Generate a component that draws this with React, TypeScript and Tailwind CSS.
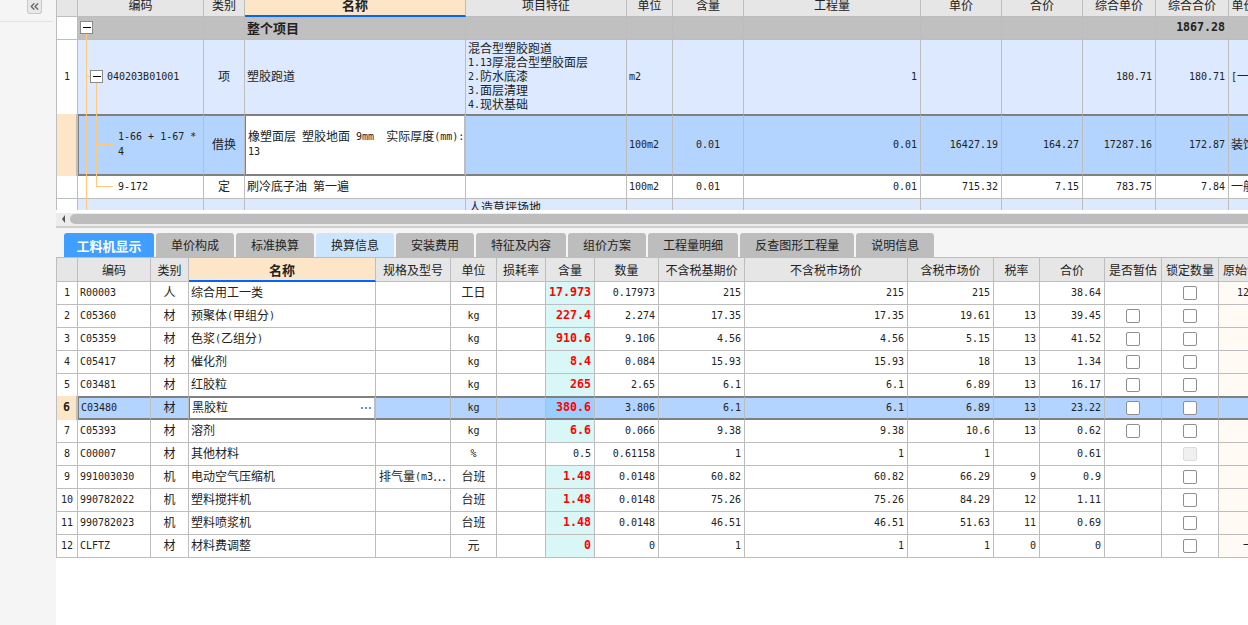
import type { ReactNode } from "react";
import { ChevronsLeft } from "lucide-react";

const TOP_COLS = "grid w-[1270px] grid-cols-[21px_126px_41px_221px_161px_46px_71px_177px_81px_81px_73px_73px_78px]";
const LOW_COLS = "grid w-[1248px] grid-cols-[21px_73px_38px_187px_75px_46px_49px_49px_64px_86px_163px_86px_46px_65px_57px_57px_57px]";

/** Latin runs go in a narrow mono face, the way the bitmap font draws them next to CJK */
function T({ text, bold }: { text: string; bold?: boolean }) {
  const parts = text.split(/([\x20-\x7e]+)/).filter(Boolean);
  return (
    <span className="block min-w-0 pb-[2px]">
      {parts.map((p, i) =>
        /^[\x20-\x7e]+$/.test(p) ? (
          <span
            key={i}
            className={bold ? "align-[1px] font-['DejaVu_Sans_Mono'] text-[11.6px] font-bold" : "align-[1px] font-['DejaVu_Sans_Mono'] text-[10px]"}
          >
            {p}
          </span>
        ) : (
          <span key={i} className={bold ? "text-[13px] font-bold" : ""}>
            {p}
          </span>
        )
      )}
    </span>
  );
}

const alignClass = {
  l: "justify-start pl-[2px]",
  c: "justify-center",
  r: "justify-end pr-[3px]",
};

interface CellProps {
  text?: string;
  align?: "l" | "c" | "r";
  className?: string;
  bold?: boolean;
  children?: ReactNode;
}

function Cell({ text, align = "l", className = "", bold, children }: CellProps) {
  return (
    <div className={`flex min-w-0 items-center overflow-hidden whitespace-pre border-r border-solid border-r-[#bdbdbd] ${alignClass[align]} ${className}`}>
      {text !== undefined && <T text={text} bold={bold} />}
      {children}
    </div>
  );
}

function HeaderRow({ cols, labels, nameAt, height }: { cols: string; labels: string[]; nameAt: number; height: string }) {
  return (
    <div className={`${cols} ${height}`}>
      {labels.map((label, i) =>
        i === nameAt ? (
          <div key={i} className="flex items-center justify-center overflow-hidden whitespace-nowrap border-b-2 border-r border-b-[#0066ff] border-r-[#bdbdbd] bg-[#fde6c8] text-[13px] font-bold">
            {label}
          </div>
        ) : (
          <div key={i} className="flex items-center justify-center overflow-hidden whitespace-nowrap border-b border-r border-[#bdbdbd] bg-[#e6e6e6]">
            {label}
          </div>
        )
      )}
    </div>
  );
}

const line = "border-b border-b-[#bdbdbd]";
const picked = "border-y-2 border-y-[#808080]";

const features = ["混合型塑胶跑道", "1.13厚混合型塑胶面层", "2.防水底漆", "3.面层清理", "4.现状基础"];

function TopTable() {
  const labels = ["", "编码", "类别", "名称", "项目特征", "单位", "含量", "工程量", "单价", "合价", "综合单价", "综合合价", "单价构成文件"];
  return (
    <div className="relative h-[210px] overflow-hidden border-l border-l-[#bdbdbd]">
      <div className="-mt-[7px]">
        <HeaderRow cols={TOP_COLS} labels={labels} nameAt={3} height="h-[24px]" />

        {/* whole project */}
        <div className={`${TOP_COLS} h-[23px]`}>
          <Cell className={`bg-white ${line}`} />
          {labels.slice(1).map((_, i) => (
            <Cell
              key={i}
              className={`bg-[#c0c0c0] ${line}`}
              align={i === 10 ? "r" : "l"}
              text={i === 2 ? "整个项目" : i === 10 ? "1867.28" : undefined}
              bold
            />
          ))}
        </div>

        {/* bill item */}
        <div className={`${TOP_COLS} h-[74px] bg-[#dce9fe]`}>
          <Cell className="bg-white" align="c" text="1" />
          <Cell className="pl-[29px]" text="040203B01001" />
          <Cell align="c" text="项" />
          <Cell text="塑胶跑道" />
          <Cell>
            <div>
              {features.map((f) => (
                <div key={f} className="flex h-[14px] items-center">
                  <T text={f} />
                </div>
              ))}
            </div>
          </Cell>
          <Cell text="m2" />
          <Cell />
          <Cell align="r" text="1" />
          <Cell />
          <Cell />
          <Cell align="r" text="180.71" />
          <Cell align="r" text="180.71" />
          <Cell text="[一" />
        </div>

        {/* selected substitution */}
        <div className={`${TOP_COLS} h-[62px]`}>
          <Cell className="border-r-2 border-r-[#0066ff] bg-[#fde6c8]" />
          <Cell className={`${picked} border-l border-l-[#808080] bg-[#b3d4ff] pl-[39px] leading-[14px]`} text={"1-66 + 1-67 *\n4"} />
          <Cell align="c" className={`${picked} border-r-[#808080] bg-[#b3d4ff]`} text="借换" />
          <Cell className={`${picked} border-r-2 border-l border-x-[#808080] bg-white pl-[1px] leading-[14px]`} text={"橡塑面层 塑胶地面 9mm  实际厚度(mm):\n13"} />
          <Cell className={`${picked} bg-[#b3d4ff]`} />
          <Cell className={`${picked} bg-[#b3d4ff]`} text="100m2" />
          <Cell align="c" className={`${picked} bg-[#b3d4ff]`} text="0.01" />
          <Cell align="r" className={`${picked} bg-[#b3d4ff]`} text="0.01" />
          <Cell align="r" className={`${picked} bg-[#b3d4ff]`} text="16427.19" />
          <Cell align="r" className={`${picked} bg-[#b3d4ff]`} text="164.27" />
          <Cell align="r" className={`${picked} bg-[#b3d4ff]`} text="17287.16" />
          <Cell align="r" className={`${picked} bg-[#b3d4ff]`} text="172.87" />
          <Cell className={`${picked} bg-[#b3d4ff]`} text="装饰" />
        </div>

        {/* quota row */}
        <div className={`${TOP_COLS} h-[23px] bg-white`}>
          <Cell className={line} />
          <Cell className={`${line} pl-[40px]`} text="9-172" />
          <Cell align="c" className={line} text="定" />
          <Cell className={line} text="刷冷底子油 第一遍" />
          <Cell className={line} />
          <Cell className={line} text="100m2" />
          <Cell align="c" className={line} text="0.01" />
          <Cell align="r" className={line} text="0.01" />
          <Cell align="r" className={line} text="715.32" />
          <Cell align="r" className={line} text="7.15" />
          <Cell align="r" className={line} text="783.75" />
          <Cell align="r" className={line} text="7.84" />
          <Cell className={line} text="一般" />
        </div>

        {/* next item, cut off by the pane */}
        <div className={`${TOP_COLS} h-[75px] bg-[#dce9fe]`}>
          <Cell className="bg-white" />
          <Cell />
          <Cell />
          <Cell />
          <Cell className="items-start pl-[3px] pt-[2px]" text="人造草坪场地" />
          <Cell />
          <Cell />
          <Cell />
          <Cell />
          <Cell />
          <Cell />
          <Cell />
          <Cell />
        </div>
      </div>

      {/* tree guide lines and expand boxes */}
      <svg className="pointer-events-none absolute left-0 top-0" width="70" height="210">
        <g stroke="#ffc97a" fill="none" shapeRendering="crispEdges">
          <path d="M29.5 34V210" />
          <path d="M30 76.5H34" />
          <path d="M39.5 83V186.5" />
          <path d="M40 144.5H56" />
          <path d="M40 186.5H56" />
        </g>
        <g shapeRendering="crispEdges">
          <rect x="23.5" y="21.5" width="12" height="12" fill="#fff" stroke="#8a8a8a" />
          <path d="M25.5 27.5H33.5" stroke="#000" />
          <rect x="33.5" y="70.5" width="12" height="12" fill="#fff" stroke="#8a8a8a" />
          <path d="M35.5 76.5H43.5" stroke="#000" />
        </g>
      </svg>
    </div>
  );
}

function ScrollBar() {
  return (
    <div className="flex h-[16px] items-center border-t-[3px] border-t-white bg-[#ececec] pb-[2px] pt-px">
      <svg className="ml-[6px] mr-[5px] shrink-0" width="3" height="8" viewBox="0 0 3 8">
        <path d="M3 0V8L0 4Z" fill="#555" />
      </svg>
      <div className="h-[10px] flex-1 rounded-l-[5px] bg-[#bdbdbd]" />
    </div>
  );
}

const tabs = ["工料机显示", "单价构成", "标准换算", "换算信息", "安装费用", "特征及内容", "组价方案", "工程量明细", "反查图形工程量", "说明信息"];

function Tabs() {
  return (
    <div className="flex h-[32px] gap-[2px] border-t-2 border-b border-t-[#cfcfcf] border-b-[#bdbdbd] bg-[#f5f5f5] pl-[8px] pt-[5px]">
      {tabs.map((t, i) => (
        <div
          key={t}
          className={`flex h-[24px] items-center rounded-t-[3px] ${
            i === 0 ? "bg-[#409eff] px-[12.5px] text-[13px] font-bold text-white" : i === 3 ? "bg-[#cce5ff] px-[15px]" : "bg-[#bdbdbd] px-[15px]"
          }`}
        >
          {t}
        </div>
      ))}
    </div>
  );
}

interface Row {
  code: string;
  kind: string;
  name: string;
  spec?: string;
  unit: string;
  qty: string;
  amount: string;
  basePrice: string;
  marketPrice: string;
  taxPrice: string;
  rate: string;
  total: string;
  estimate?: boolean;
  lockOff?: boolean;
  plain?: boolean;
  orig?: string;
}

const rows: Row[] = [
  { code: "R00003", kind: "人", name: "综合用工一类", unit: "工日", qty: "17.973", amount: "0.17973", basePrice: "215", marketPrice: "215", taxPrice: "215", rate: "", total: "38.64", orig: "12" },
  { code: "C05360", kind: "材", name: "预聚体(甲组分)", unit: "kg", qty: "227.4", amount: "2.274", basePrice: "17.35", marketPrice: "17.35", taxPrice: "19.61", rate: "13", total: "39.45", estimate: true },
  { code: "C05359", kind: "材", name: "色浆(乙组分)", unit: "kg", qty: "910.6", amount: "9.106", basePrice: "4.56", marketPrice: "4.56", taxPrice: "5.15", rate: "13", total: "41.52", estimate: true },
  { code: "C05417", kind: "材", name: "催化剂", unit: "kg", qty: "8.4", amount: "0.084", basePrice: "15.93", marketPrice: "15.93", taxPrice: "18", rate: "13", total: "1.34", estimate: true },
  { code: "C03481", kind: "材", name: "红胶粒", unit: "kg", qty: "265", amount: "2.65", basePrice: "6.1", marketPrice: "6.1", taxPrice: "6.89", rate: "13", total: "16.17", estimate: true },
  { code: "C03480", kind: "材", name: "黑胶粒", unit: "kg", qty: "380.6", amount: "3.806", basePrice: "6.1", marketPrice: "6.1", taxPrice: "6.89", rate: "13", total: "23.22", estimate: true },
  { code: "C05393", kind: "材", name: "溶剂", unit: "kg", qty: "6.6", amount: "0.066", basePrice: "9.38", marketPrice: "9.38", taxPrice: "10.6", rate: "13", total: "0.62", estimate: true },
  { code: "C00007", kind: "材", name: "其他材料", unit: "%", qty: "0.5", amount: "0.61158", basePrice: "1", marketPrice: "1", taxPrice: "1", rate: "", total: "0.61", lockOff: true, plain: true },
  { code: "991003030", kind: "机", name: "电动空气压缩机", spec: "排气量(m3⋯", unit: "台班", qty: "1.48", amount: "0.0148", basePrice: "60.82", marketPrice: "60.82", taxPrice: "66.29", rate: "9", total: "0.9" },
  { code: "990782022", kind: "机", name: "塑料搅拌机", unit: "台班", qty: "1.48", amount: "0.0148", basePrice: "75.26", marketPrice: "75.26", taxPrice: "84.29", rate: "12", total: "1.11" },
  { code: "990782023", kind: "机", name: "塑料喷浆机", unit: "台班", qty: "1.48", amount: "0.0148", basePrice: "46.51", marketPrice: "46.51", taxPrice: "51.63", rate: "11", total: "0.69" },
  { code: "CLFTZ", kind: "材", name: "材料费调整", unit: "元", qty: "0", amount: "0", basePrice: "1", marketPrice: "1", taxPrice: "1", rate: "0", total: "0", orig: "一" },
];

function Check({ off }: { off?: boolean }) {
  return (
    <span className={`block h-[14px] w-[14px] rounded-[2px] border ${off ? "border-[#dcdcdc] bg-[#f0f0f0]" : "border-[#8f8f8f] bg-white"}`} />
  );
}

function LowRow({ row, index }: { row: Row; index: number }) {
  const sel = index === 5;
  const before = index === 4;
  const height = sel ? "h-[24px]" : before ? "h-[22px]" : "h-[23px]";
  const rule = sel ? picked : before ? "" : line;
  const bg = sel ? "bg-[#b3d4ff]" : "bg-white";
  const base = `${rule} ${bg}`;

  return (
    <div className={`${LOW_COLS} ${height}`}>
      <Cell
        align="c"
        className={sel ? "border-r-2 border-r-[#0066ff] bg-[#fde6c8]" : `${rule} bg-white`}
        text={String(index + 1)}
        bold={sel}
      />
      <Cell className={`${base} ${sel ? "border-l border-l-[#808080]" : ""}`} text={row.code} />
      <Cell align="c" className={`${base} ${sel ? "border-r-[#808080]" : ""}`} text={row.kind} />
      {sel ? (
        <Cell className={`${picked} border-r-2 border-l border-x-[#808080] bg-white`}>
          <T text={row.name} />
          <svg className="ml-auto mr-[3px] shrink-0" width="10" height="2" viewBox="0 0 10 2">
            <path d="M0 0h2v2H0zM4 0h2v2H4zM8 0h2v2H8z" fill="#5b9bd5" />
          </svg>
        </Cell>
      ) : (
        <Cell className={base} text={row.name} />
      )}
      <Cell className={`${base} pl-[3px]`} text={row.spec ?? ""} />
      <Cell align="c" className={base} text={row.unit} />
      <Cell className={base} />
      <Cell
        align="r"
        className={`${rule} ${row.plain ? "bg-white" : sel ? "bg-[#99ceff] text-[#ff0000]" : "bg-[#d9f7f7] text-[#ff0000]"}`}
        text={row.qty}
        bold={!row.plain}
      />
      <Cell align="r" className={base} text={row.amount} />
      <Cell align="r" className={base} text={row.basePrice} />
      <Cell align="r" className={base} text={row.marketPrice} />
      <Cell align="r" className={base} text={row.taxPrice} />
      <Cell align="r" className={base} text={row.rate} />
      <Cell align="r" className={base} text={row.total} />
      <Cell align="c" className={base}>
        {row.estimate && <Check />}
      </Cell>
      <Cell align="c" className={base}>
        <Check off={row.lockOff} />
      </Cell>
      <Cell className={`${rule} ${sel ? "bg-[#b3d4ff]" : "bg-[#fffaf4]"} ${row.orig === "一" ? "pl-[24px]" : "pl-[18px]"}`} text={row.orig ?? ""} />
    </div>
  );
}

function LowTable() {
  const labels = ["", "编码", "类别", "名称", "规格及型号", "单位", "损耗率", "含量", "数量", "不含税基期价", "不含税市场价", "含税市场价", "税率", "合价", "是否暂估", "锁定数量", "原始含量"];
  return (
    <div className="overflow-hidden border-l border-l-[#bdbdbd]">
      <HeaderRow cols={LOW_COLS} labels={labels} nameAt={3} height="h-[24px]" />
      {rows.map((row, i) => (
        <LowRow key={row.code} row={row} index={i} />
      ))}
    </div>
  );
}

export default function App() {
  return (
    <div className="flex h-[625px] w-[1248px] overflow-hidden bg-white font-['Noto_Sans_CJK_SC',sans-serif] text-[12px] leading-none text-[#222]">
      <aside className="w-[56px] shrink-0 bg-[#f5f5f5]">
        <div className="mr-[3px] flex h-[22px] items-start justify-end border-b border-b-[#e4e4e4] pr-[11px]">
          <button type="button" className="flex h-[14px] w-[15px] items-center justify-center rounded-b-[3px] border border-t-0 border-[#c8c8c8] bg-[#e8e8e8] text-[#666]">
            <ChevronsLeft className="h-[13px] w-[13px]" strokeWidth={2.4} />
          </button>
        </div>
      </aside>
      <main className="w-[1192px] shrink-0 overflow-hidden">
        <TopTable />
        <ScrollBar />
        <Tabs />
        <LowTable />
      </main>
    </div>
  );
}
